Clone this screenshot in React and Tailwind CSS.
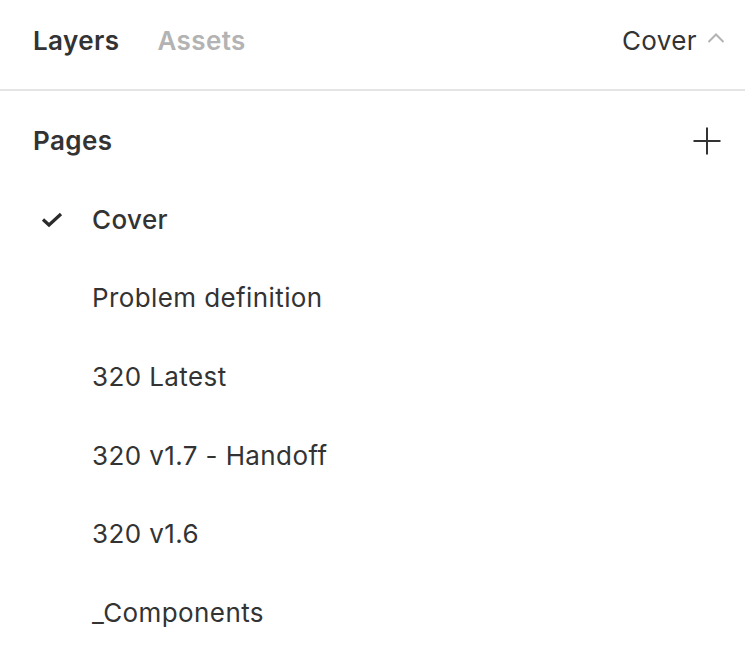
import React from "react";

const pages = [
  { name: "Cover", active: true },
  { name: "Problem definition" },
  { name: "320 Latest" },
  { name: "320 v1.7 - Handoff" },
  { name: "320 v1.6" },
  { name: "_Components" },
];

export default function App() {
  return (
    <div
      className="w-[745px] h-[671px] bg-white overflow-hidden text-[#333333] text-[26px] leading-[32px] tracking-[0.4px]"
      style={{ fontFamily: "Inter, 'Noto Sans', sans-serif" }}
    >
      <div className="h-[89px] flex items-start pt-[25px] pl-[33px] pr-[20px]">
        <div className="font-semibold">Layers</div>
        <div className="ml-[38px] font-semibold text-[#b3b3b3]">Assets</div>
        <div className="ml-auto flex items-center">
          <span>Cover</span>
          <svg width="18" height="12" viewBox="0 0 18 12" className="ml-[10px] -mt-[6px]">
            <path d="M1.5 10 L9 2.5 L16.5 10" fill="none" stroke="#b3b3b3" strokeWidth="2" />
          </svg>
        </div>
      </div>
      <div className="h-[2px] bg-[#e5e5e5]" />
      <div className="pt-[11px]">
        <div className="h-[78px] flex items-center pl-[33px] pr-[24px]">
          <div className="font-semibold">Pages</div>
          <svg width="28" height="28" viewBox="0 0 28 28" className="ml-auto -mt-[1px]">
            <path d="M14 0.5 V27.5 M0.5 14 H27.5" fill="none" stroke="#333333" strokeWidth="2" />
          </svg>
        </div>
        {pages.map((p) => (
          <div key={p.name} className="h-[78.6px] flex items-center pt-[1px]">
            <div className="w-[92px] flex justify-start pl-[41px]">
              {p.active && (
                <svg width="22" height="16" viewBox="0 0 22 16">
                  <path d="M2 7.5 L8 13 L20 2" fill="none" stroke="#2b2b2b" strokeWidth="3.2" />
                </svg>
              )}
            </div>
            <div className={p.active ? "font-medium" : ""}>{p.name}</div>
          </div>
        ))}
      </div>
    </div>
  );
}
